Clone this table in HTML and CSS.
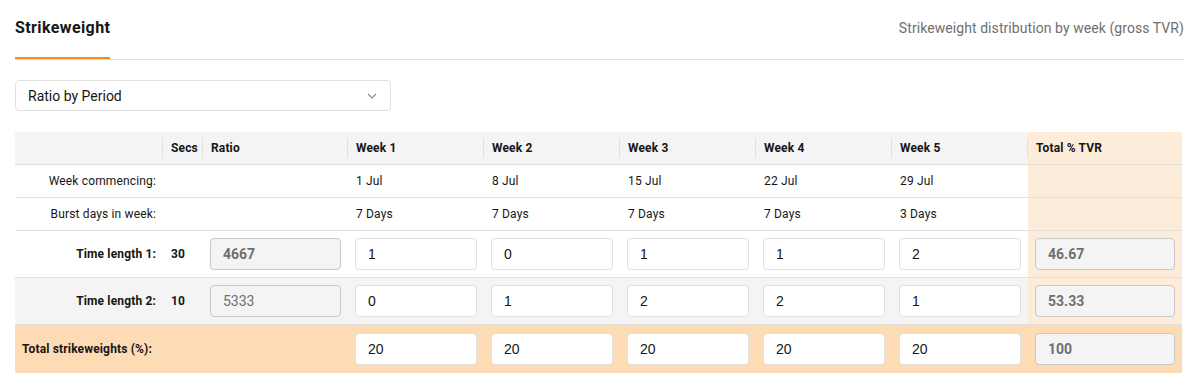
FILE: index.html
```html
<!DOCTYPE html>
<html lang="en">
<head>
<meta charset="utf-8">
<title>Strikeweight</title>
<link rel="stylesheet" href="styles.css">
</head>
<body>
<div class="page">
  <div class="topbar">
    <div class="tab">Strikeweight</div>
    <div class="subtitle">Strikeweight distribution by week (gross TVR)</div>
  </div>

  <div class="select">
    <span>Ratio by Period</span>
    <svg class="chev" width="10" height="6" viewBox="0 0 10 6"><polyline points="1,1 5,5 9,1" fill="none" stroke="#8d8d8d" stroke-width="1.2"/></svg>
  </div>

  <div class="table">
    <div class="row head">
      <div class="cell"></div>
      <div class="cell sep">Secs</div>
      <div class="cell sep">Ratio</div>
      <div class="cell sep">Week 1</div>
      <div class="cell sep">Week 2</div>
      <div class="cell sep">Week 3</div>
      <div class="cell sep">Week 4</div>
      <div class="cell sep">Week 5</div>
      <div class="cell sep total">Total % TVR</div>
    </div>
    <div class="row info">
      <div class="cell label">Week commencing:</div>
      <div class="cell"></div>
      <div class="cell"></div>
      <div class="cell">1 Jul</div>
      <div class="cell">8 Jul</div>
      <div class="cell">15 Jul</div>
      <div class="cell">22 Jul</div>
      <div class="cell">29 Jul</div>
      <div class="cell total"></div>
    </div>
    <div class="row info">
      <div class="cell label">Burst days in week:</div>
      <div class="cell"></div>
      <div class="cell"></div>
      <div class="cell">7 Days</div>
      <div class="cell">7 Days</div>
      <div class="cell">7 Days</div>
      <div class="cell">7 Days</div>
      <div class="cell">3 Days</div>
      <div class="cell total"></div>
    </div>
    <div class="row tl">
      <div class="cell label strong">Time length 1:</div>
      <div class="cell strong">30</div>
      <div class="cell in"><input class="field dis bold" value="4667" disabled></div>
      <div class="cell in"><input class="field" value="1"></div>
      <div class="cell in"><input class="field" value="0"></div>
      <div class="cell in"><input class="field" value="1"></div>
      <div class="cell in"><input class="field" value="1"></div>
      <div class="cell in"><input class="field" value="2"></div>
      <div class="cell in total"><input class="field dis bold" value="46.67" disabled></div>
    </div>
    <div class="row tl alt">
      <div class="cell label strong">Time length 2:</div>
      <div class="cell strong">10</div>
      <div class="cell in"><input class="field dis" value="5333" disabled></div>
      <div class="cell in"><input class="field" value="0"></div>
      <div class="cell in"><input class="field" value="1"></div>
      <div class="cell in"><input class="field" value="2"></div>
      <div class="cell in"><input class="field" value="2"></div>
      <div class="cell in"><input class="field" value="1"></div>
      <div class="cell in total"><input class="field dis bold" value="53.33" disabled></div>
    </div>
    <div class="row sum">
      <div class="cell sumlabel strong">Total strikeweights (%):</div>
      <div class="cell in"><input class="field" value="20"></div>
      <div class="cell in"><input class="field" value="20"></div>
      <div class="cell in"><input class="field" value="20"></div>
      <div class="cell in"><input class="field" value="20"></div>
      <div class="cell in"><input class="field" value="20"></div>
      <div class="cell in"><input class="field dis bold" value="100" disabled></div>
    </div>
  </div>
</div>
</body>
</html>
```

FILE: styles.css
```css
* { box-sizing: border-box; }

body {
  margin: 0;
  background: #ffffff;
  color: #161616;
  font-family: Roboto, "Liberation Sans", Arial, sans-serif;
}

.page {
  padding: 0 15px;
}

.topbar {
  display: flex;
  justify-content: space-between;
  align-items: flex-start;
  border-bottom: 1px solid #e0e0e0;
}

.tab {
  padding-top: 18px;
  padding-bottom: 19px;
  line-height: 20px;
  font-size: 16px;
  font-weight: 700;
  letter-spacing: 0.4px;
  border-bottom: 2px solid #f78b1e;
}

.subtitle {
  padding-top: 18px;
  line-height: 20px;
  font-size: 14px;
  letter-spacing: 0.07px;
  color: #6f6f6f;
}

.select {
  margin-top: 20px;
  width: 376px;
  height: 31px;
  border: 1px solid #e0e0e0;
  border-radius: 4px;
  display: flex;
  align-items: center;
  justify-content: space-between;
  padding: 0 12px;
  font-size: 14px;
}

.chev { display: block; margin-right: 1px; }

.table {
  margin-top: 21px;
  width: 1167px;
}

.row {
  display: grid;
  grid-template-columns: 148px 40px 145px repeat(5, 136px) 154px;
  border-bottom: 1px solid #e0e0e0;
}

.cell {
  position: relative;
  display: flex;
  align-items: center;
  padding: 0 7px 0 8px;
  font-size: 12px;
  letter-spacing: 0.15px;
}

.head { background: #f4f4f4; }
.head .cell { height: 32px; font-weight: 700; }
.head .sep::before {
  content: "";
  position: absolute;
  left: -1px;
  top: 6px;
  bottom: 6px;
  width: 1px;
  background: #e0e0e0;
}

.info .cell { height: 32px; }

.label {
  justify-content: flex-end;
  padding-right: 7px;
}

.strong { font-weight: 700; }

.total { background: #fdecd9; }

.tl .cell { height: 46px; }
.tl .cell.in { padding: 0 7px; }
.alt { background: #f4f4f4; }

.sum {
  background: #fddbb4;
  border-bottom: none;
  grid-template-columns: 333px repeat(5, 136px) 154px;
}
.sum .cell { height: 48px; }
.sum .cell.in { padding: 0 7px; }
.sumlabel { padding-left: 7px; }

.field {
  width: 100%;
  height: 32px;
  border: 1px solid #e0e0e0;
  border-radius: 4px;
  background: #ffffff;
  padding: 0 12px;
  font-family: "Liberation Sans", Arial, sans-serif;
  font-size: 14px;
  color: #161616;
  outline: none;
}

.field.dis {
  background: #f4f4f4;
  border-color: #c8c8c8;
  color: #6f6f6f;
  font-family: Roboto, "Liberation Sans", Arial, sans-serif;
}

.field.bold { font-weight: 700; }
```
